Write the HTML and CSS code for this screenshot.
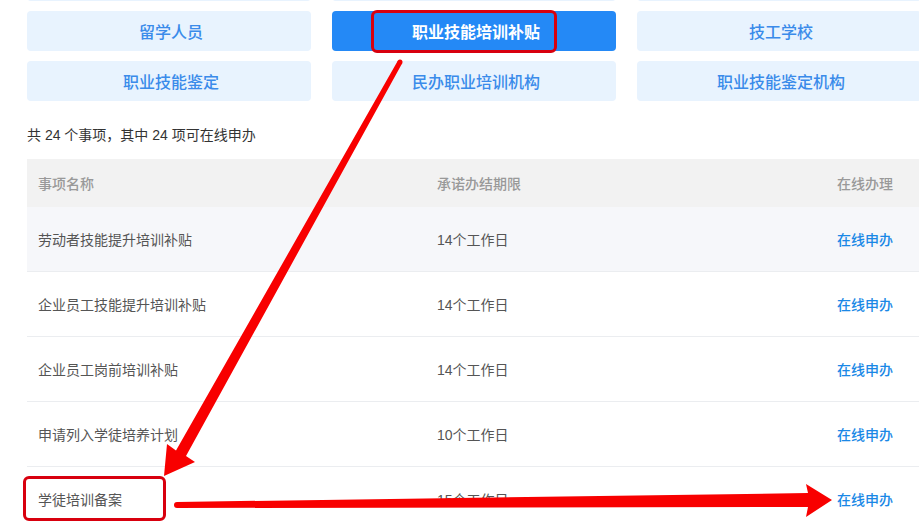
FILE: index.html
```html
<!DOCTYPE html>
<html lang="zh-CN">
<head>
<meta charset="utf-8">
<title>职业技能培训补贴</title>
<link rel="stylesheet" href="styles.css">
</head>
<body>
<div class="page">
  <div class="cats">
    <div class="cat"></div>
    <div class="cat"></div>
    <div class="cat"></div>
    <div class="cat">留学人员</div>
    <div class="cat active">职业技能培训补贴</div>
    <div class="cat">技工学校</div>
    <div class="cat">职业技能鉴定</div>
    <div class="cat">民办职业培训机构</div>
    <div class="cat">职业技能鉴定机构</div>
  </div>
  <p class="summary">共 24 个事项，其中 24 项可在线申办</p>
  <div class="table">
    <div class="row head">
      <div>事项名称</div>
      <div>承诺办结期限</div>
      <div class="op">在线办理</div>
    </div>
    <div class="row hover">
      <div>劳动者技能提升培训补贴</div>
      <div>14个工作日</div>
      <div class="op"><a class="link">在线申办</a></div>
    </div>
    <div class="row">
      <div>企业员工技能提升培训补贴</div>
      <div>14个工作日</div>
      <div class="op"><a class="link">在线申办</a></div>
    </div>
    <div class="row">
      <div>企业员工岗前培训补贴</div>
      <div>14个工作日</div>
      <div class="op"><a class="link">在线申办</a></div>
    </div>
    <div class="row">
      <div>申请列入学徒培养计划</div>
      <div>10个工作日</div>
      <div class="op"><a class="link">在线申办</a></div>
    </div>
    <div class="row">
      <div>学徒培训备案</div>
      <div>15个工作日</div>
      <div class="op"><a class="link">在线申办</a></div>
    </div>
  </div>
</div>

<div class="annot">
  <div class="mark mark-btn"></div>
  <div class="mark mark-row"></div>
  <svg class="arrows" width="919" height="531" viewBox="0 0 919 531" xmlns="http://www.w3.org/2000/svg">
    <polygon fill="#f80000" points="402.2,63.2 186,456 195,462 164,476 167,444 176,450.6 397.8,60.8"/>
    <circle fill="#f80000" cx="400" cy="62" r="2.5"/>
    <polygon fill="#f80000" points="177,502 808,493 806,484 832,500 806,517 808,507 177,508"/>
    <circle fill="#f80000" cx="177" cy="505" r="3"/>
  </svg>
</div>
</body>
</html>
```

FILE: styles.css
```css
* { box-sizing: border-box; }

html, body {
  margin: 0;
  padding: 0;
}

body {
  width: 919px;
  height: 531px;
  overflow: hidden;
  position: relative;
  background: #fff;
  font-family: "Liberation Sans", "Noto Sans CJK SC", sans-serif;
  color: #333;
}

.page {
  margin-top: -39px;
  padding-left: 27px;
}

.cats {
  display: grid;
  grid-template-columns: 284px 284px 284px;
  column-gap: 21px;
  row-gap: 10px;
}

.cat {
  height: 40px;
  padding-left: 4px;
  border-radius: 4px;
  background: #e8f3fe;
  color: #3a8bea;
  font-size: 16px;
  font-weight: 500;
  display: flex;
  align-items: center;
  justify-content: center;
}

.cat.active {
  background: #2489f6;
  color: #fff;
  font-weight: bold;
}

.summary {
  margin: 24px 0 0;
  font-size: 14px;
  line-height: 20px;
  color: #333;
}

.table {
  margin-top: 14px;
  width: 892px;
}

.row {
  display: grid;
  grid-template-columns: 399px 1fr auto;
  align-items: center;
  height: 65px;
  padding: 0 26px 1px 11px;
  border-bottom: 1px solid #ebedf0;
  font-size: 14px;
  color: #555;
}

.row.head {
  height: 48px;
  background: #f2f2f2;
  color: #999;
  font-weight: 500;
  border-bottom: none;
}

.row.hover {
  background: #f6f7fa;
}

.op {
  justify-self: end;
}

.link {
  color: #1a88e6;
  font-weight: 500;
  text-decoration: none;
}

.annot {
  position: absolute;
  left: 0;
  top: 0;
  width: 919px;
  height: 531px;
  pointer-events: none;
}

.arrows {
  position: absolute;
  left: 0;
  top: 0;
}

.mark {
  position: absolute;
  border: 3px solid #d8000e;
  border-radius: 6px;
}

.mark-btn {
  left: 371px;
  top: 10px;
  width: 186px;
  height: 43px;
}

.mark-row {
  left: 23px;
  top: 476px;
  width: 143px;
  height: 45px;
}
```
